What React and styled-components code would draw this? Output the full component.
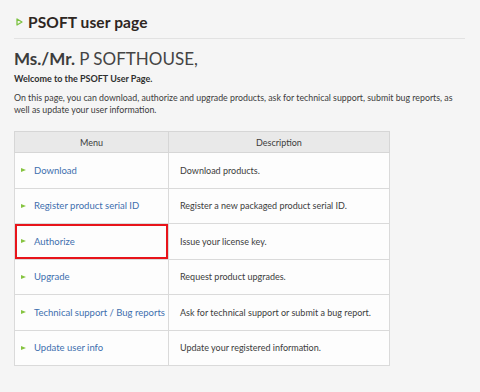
import React from "react";
import styled, { createGlobalStyle } from "styled-components";

const Global = createGlobalStyle`
  html, body { margin: 0; padding: 0; }
  body {
    background: #f5f5f5;
    font-family: Lato, "Noto Sans", sans-serif;
    color: #3c3c3c;
  }
`;

const Page = styled.div`
  width: 480px;
  height: 392px;
  box-sizing: border-box;
  padding: 0 15px 0 14px;
  overflow: hidden;
`;

const TitleBar = styled.header`
  display: flex;
  align-items: center;
  gap: 5px;
  height: 39px;
  box-sizing: border-box;
  padding: 6px 0 0 2px;
  border-bottom: 1px solid #e2e2e2;
`;

const Title = styled.h1`
  margin: 0;
  font-size: 15.5px;
  font-weight: 700;
  color: #2e2622;
  letter-spacing: 0.1px;
`;

const Greeting = styled.h2`
  margin: 9px 0 0;
  font-size: 17px;
  font-weight: 400;
  color: #444;
  line-height: 22px;
  letter-spacing: 0;
`;

const Honorific = styled.span`
  font-weight: 700;
  color: #3c3c3c;
`;

const Welcome = styled.p`
  margin: 2px 0 0;
  font-size: 9px;
  font-weight: 700;
  color: #2f2f2f;
  line-height: 13px;
`;

const Intro = styled.p`
  margin: 7px 0 0;
  max-width: 442px;
  font-size: 8.8px;
  line-height: 11.5px;
  color: #3c3c3c;
`;

const MenuTable = styled.table`
  margin-top: 16px;
  width: 376px;
  border-collapse: collapse;
  background: #fdfdfd;
  font-size: 9px;
`;

const HeadCell = styled.th`
  height: 20px;
  padding: 0;
  background: #e9e9e9;
  border: 1px solid #d6d6d6;
  font-weight: 400;
  color: #3c3c3c;
  text-align: center;
  width: ${(p) => p.$w || "auto"};
`;

const Cell = styled.td`
  height: 34.5px;
  padding: 0;
  border: 1px solid #dadada;
  vertical-align: middle;
`;

const MenuLink = styled.a`
  display: flex;
  align-items: center;
  box-sizing: border-box;
  height: 34.5px;
  padding-left: 4px;
  gap: 8px;
  color: #3d6fae;
  font-size: 9.5px;
  white-space: nowrap;
  text-decoration: none;
  border: 2px solid ${(p) => (p.$active ? "#e8141a" : "transparent")};
`;

const Arrow = styled.span`
  flex: none;
  width: 0;
  height: 0;
  border-top: 2.5px solid transparent;
  border-bottom: 2.5px solid transparent;
  border-left: 5px solid #86c440;
`;

const Desc = styled.span`
  display: block;
  padding-left: 11px;
  color: #3c3c3c;
`;

const rows = [
  ["Download", "Download products."],
  ["Register product serial ID", "Register a new packaged product serial ID."],
  ["Authorize", "Issue your license key.", true],
  ["Upgrade", "Request product upgrades."],
  ["Technical support / Bug reports", "Ask for technical support or submit a bug report."],
  ["Update user info", "Update your registered information."],
];

function PlayIcon() {
  return (
    <svg width="7" height="8" viewBox="0 0 7 8">
      <path d="M1 1 L6 4 L1 7 Z" fill="none" stroke="#7cc242" strokeWidth="1.3" strokeLinejoin="round" />
    </svg>
  );
}

export default function App() {
  return (
    <Page>
      <Global />
      <TitleBar>
        <PlayIcon />
        <Title>PSOFT user page</Title>
      </TitleBar>
      <Greeting>
        <Honorific>Ms./Mr.</Honorific> P SOFTHOUSE,
      </Greeting>
      <Welcome>Welcome to the PSOFT User Page.</Welcome>
      <Intro>
        On this page, you can download, authorize and upgrade products, ask for technical support, submit bug reports, as
        well as update your user information.
      </Intro>
      <MenuTable>
        <thead>
          <tr>
            <HeadCell $w="153px">Menu</HeadCell>
            <HeadCell>Description</HeadCell>
          </tr>
        </thead>
        <tbody>
          {rows.map(([name, desc, active]) => (
            <tr key={name}>
              <Cell>
                <MenuLink href="#" $active={active}>
                  <Arrow />
                  {name}
                </MenuLink>
              </Cell>
              <Cell>
                <Desc>{desc}</Desc>
              </Cell>
            </tr>
          ))}
        </tbody>
      </MenuTable>
    </Page>
  );
}
